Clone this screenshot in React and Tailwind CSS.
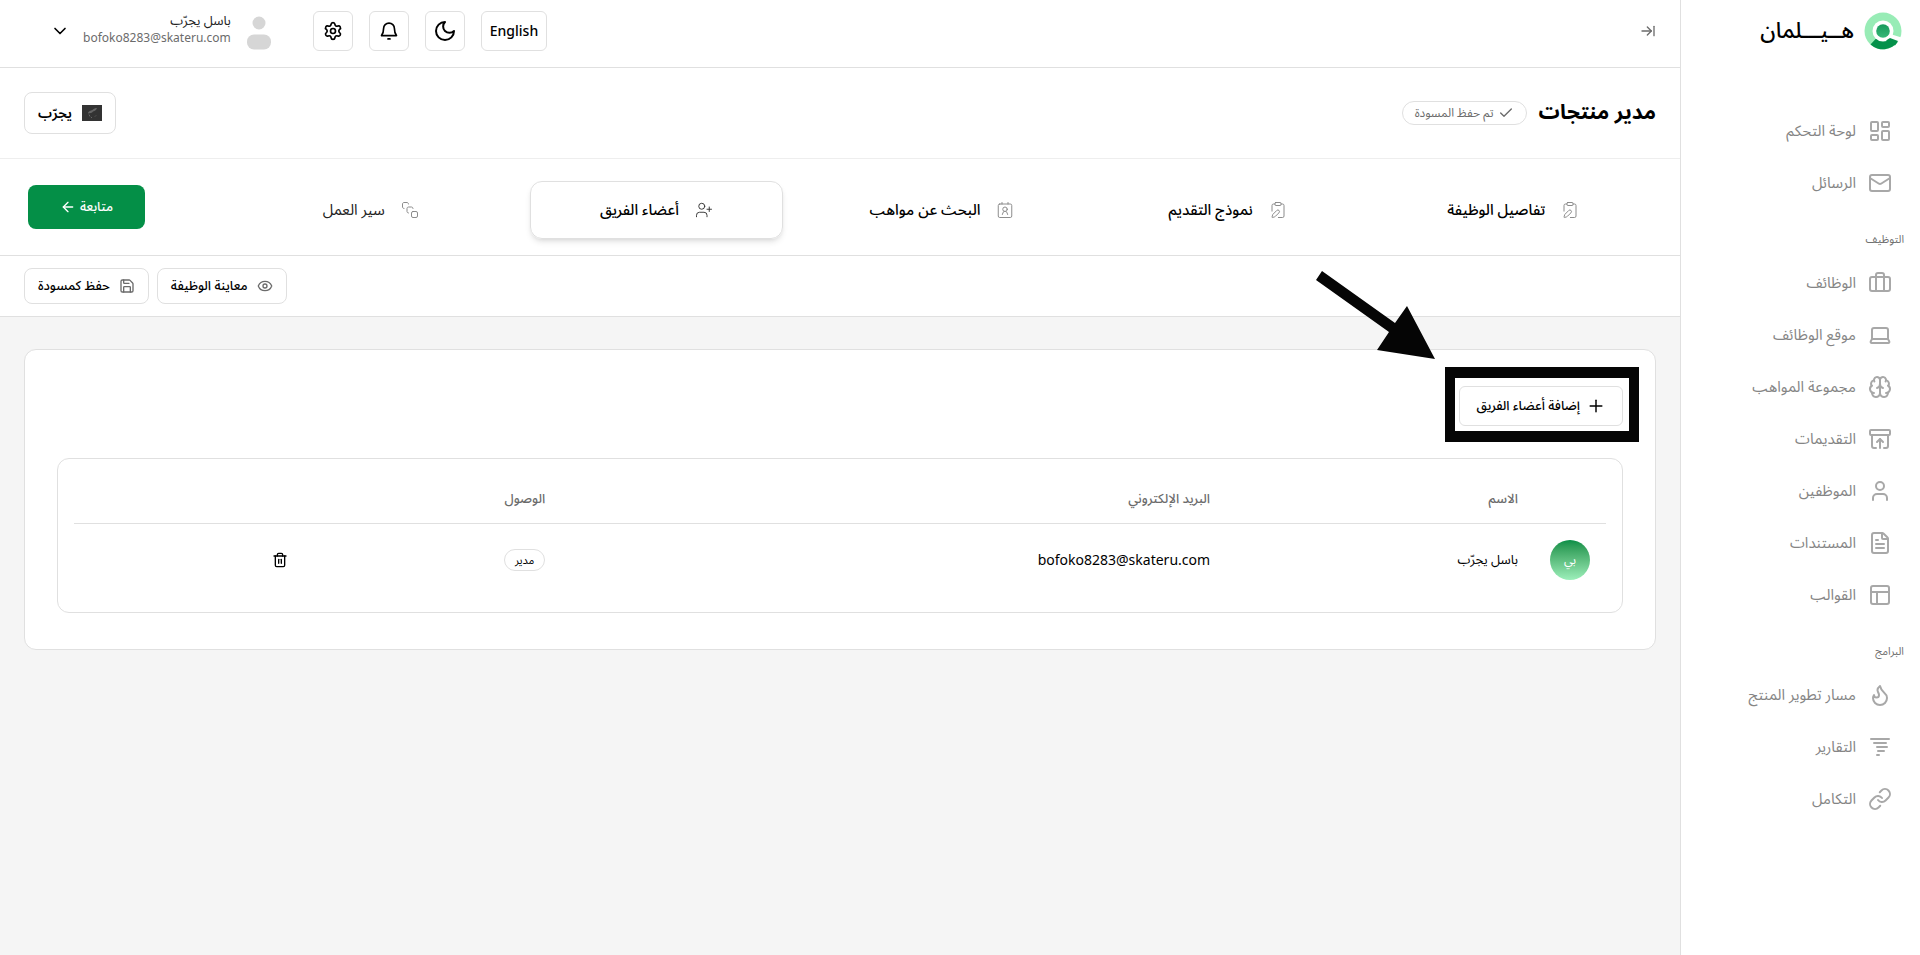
import React, { useState } from 'react';
import {
    LayoutDashboard,
    Mail,
    Briefcase,
    Laptop,
    Brain,
    ArchiveRestore,
    User,
    FileText,
    PanelsTopLeft,
    Flame,
    Tornado,
    Link,
    ArrowRightToLine,
    ArrowLeft,
    ChevronDown,
    Settings,
    Check,
    ClipboardPen,
    UserPlus,
    SquareStack,
    Eye,
    Save,
    Plus,
    Trash2,
} from 'lucide-react';

const mainLinks = [
    { label: 'لوحة التحكم', icon: LayoutDashboard },
    { label: 'الرسائل', icon: Mail },
];

const hiringLinks = [
    { label: 'الوظائف', icon: Briefcase },
    { label: 'موقع الوظائف', icon: Laptop },
    { label: 'مجموعة المواهب', icon: Brain },
    { label: 'التقديمات', icon: ArchiveRestore },
    { label: 'الموظفين', icon: User },
    { label: 'المستندات', icon: FileText },
    { label: 'القوالب', icon: PanelsTopLeft },
];

const programLinks = [
    { label: 'مسار تطوير المنتج', icon: Flame },
    { label: 'التقارير', icon: Tornado },
    { label: 'التكامل', icon: Link },
];

const members = [
    { id: 1, initials: 'بي', name: 'باسل يجرّب', email: 'bofoko8283@skateru.com', access: 'مدير' },
];

const TalentIcon = ({ className }) => (
    <svg viewBox="0 0 24 24" fill="none" stroke="currentColor" strokeWidth="1.25" strokeLinecap="round" strokeLinejoin="round" className={className}>
        <rect x="3" y="4" width="18" height="18" rx="2" />
        <path d="M8 2v2M16 2v2" />
        <circle cx="12" cy="11" r="3" />
        <path d="M8.5 18l1-3 1.5-1M15.5 18l-1-3-1.5-1" />
    </svg>
);

const MoonIcon = () => (
    <svg viewBox="0 0 24 24" fill="none" stroke="currentColor" strokeWidth="2" strokeLinecap="round" strokeLinejoin="round" className="size-6">
        <path d="M12 3a6 6 0 0 0 9 9 9 9 0 1 1-9-9Z" />
    </svg>
);

const BellIcon = () => (
    <svg viewBox="0 0 24 24" fill="none" stroke="currentColor" strokeWidth="2" strokeLinecap="round" strokeLinejoin="round" className="size-5">
        <path d="M12 2.500A6.500 6.500 0 0 0 5.500 9c0 4-.5 6-2.500 8.500h18c-2-2.500-2.500-4.500-2.500-8.500A6.500 6.500 0 0 0 12 2.500Z" />
        <path d="M10.800 21.500h2.400" />
    </svg>
);

const steps = [
    { id: 'details', label: 'تفاصيل الوظيفة', icon: ClipboardPen },
    { id: 'form', label: 'نموذج التقديم', icon: ClipboardPen },
    { id: 'talent', label: 'البحث عن مواهب', icon: TalentIcon },
    { id: 'team', label: 'أعضاء الفريق', icon: UserPlus },
    { id: 'workflow', label: 'سير العمل', icon: SquareStack },
];

const Logo = () => (
    <a href="#" className="flex items-center gap-[10px] pr-[18px] pt-3 text-black">
        <svg viewBox="0 0 38 38" className="size-[38px]">
            <defs>
                <linearGradient id="logoDot" x1="0" y1="0" x2="0" y2="1">
                    <stop offset="0" stopColor="#17995a" />
                    <stop offset="1" stopColor="#36b878" />
                </linearGradient>
            </defs>
            <circle cx="19" cy="19" r="18.5" fill="#98ecb6" />
            <path d="M34 29.5A18.5 18.5 0 0 1 6.5 32.5L19 19L27 26Z" fill="#04914a" />
            <circle cx="19" cy="19" r="10.5" fill="#fff" />
            <path d="M26 22l11.5 3.500-3.500 4.500-9-3z" fill="#fff" />
            <path d="M26 26l8 3-3 4.500-9-5z" fill="#04914a" />
            <circle cx="19" cy="19" r="6.800" fill="url(#logoDot)" />
        </svg>
        <span className="pb-1 text-[22px] font-medium leading-8">هــيـــلمان</span>
    </a>
);

const NavGroup = ({ title, links }) => (
    <div>
        {title && <h2 className="h-12 pr-4 pt-[18px] text-[11px] leading-6 text-[#707070]">{title}</h2>}
        <ul>
            {links.map(({ label, icon: Icon }) => (
                <li key={label}>
                    <a href="#" className="flex h-[52px] items-center gap-3 pr-7 text-[15px] text-[#858585]">
                        <Icon className="size-6 text-[#a8a8a8]" strokeWidth={2} />
                        <span className="pb-[2px]">{label}</span>
                    </a>
                </li>
            ))}
        </ul>
    </div>
);

const Header = () => (
    <header className="flex h-[68px] items-start justify-between border-b border-[#e0e0e0] pl-[50px] pr-6 pt-[11px]">
        <button type="button" aria-label="طي القائمة" className="flex h-10 items-center text-[#6b6b6b]">
            <ArrowRightToLine className="size-4" />
        </button>
        <div className="flex items-center gap-4">
            <button type="button" className="h-10 rounded-md border border-[#e0e0e0] px-2 text-sm font-medium">English</button>
            <button type="button" aria-label="الوضع الليلي" className="flex size-10 items-center justify-center rounded-md border border-[#e0e0e0]">
                <MoonIcon />
            </button>
            <button type="button" aria-label="الإشعارات" className="flex size-10 items-center justify-center rounded-md border border-[#e0e0e0]">
                <BellIcon />
            </button>
            <button type="button" aria-label="الإعدادات" className="flex size-10 items-center justify-center rounded-md border border-[#e0e0e0]">
                <Settings className="size-5" />
            </button>
            <button type="button" className="flex h-10 items-center pr-[26px]">
                <svg viewBox="0 0 24 34" className="mt-1 h-[34px] w-6" fill="#d6d6d6">
                    <circle cx="12" cy="7" r="6.500" />
                    <rect x="0" y="18.500" width="24" height="15" rx="7" />
                </svg>
                <span className="mr-4 pb-[6px] text-right">
                    <span className="block text-[13px] leading-5 text-[#222]">باسل يجرّب</span>
                    <span dir="ltr" className="block text-xs leading-4 text-[#6b6b6b]">bofoko8283@skateru.com</span>
                </span>
                <ChevronDown className="mr-[13px] size-5" />
            </button>
        </div>
    </header>
);

const TitleBar = () => (
    <div className="flex h-[91px] items-center justify-between border-b border-[#eee] px-6">
        <div className="flex items-center gap-3">
            <h1 className="pb-[2px] text-[21px] font-bold">مدير منتجات</h1>
            <span className="flex h-6 items-center gap-1 rounded-full border border-[#e0e0e0] px-3 text-xs text-[#6b6b6b]">
                <Check className="size-4" />
                تم حفظ المسودة
            </span>
        </div>
        <button type="button" className="flex h-[42px] items-center gap-[10px] rounded-lg border border-[#e0e0e0] px-[13px] text-sm font-semibold">
            <svg viewBox="0 0 20 16" className="h-4 w-5">
                <rect width="20" height="16" fill="#333" />
                <path d="M15 3c-3 0-4 2-6 2.500-2 .5-3 1.500-3 3 2-.5 4-.5 5-2 2-.5 3.500-1.500 4-3.500Z" fill="#666" />
                <path d="M7 9.500l1 2M9 12.500h1M13 11.500l1-1" fill="none" stroke="#666" strokeWidth="1" />
            </svg>
            يجرّب
        </button>
    </div>
);

const Steps = () => {
    const [active, setActive] = useState('team');

    return (
        <div className="flex items-start justify-between border-b border-[#e0e0e0] pb-4 pl-7 pr-10 pt-[22px]">
            <nav className="grid flex-1 grid-cols-5 gap-8">
                {steps.map(({ id, label, icon: Icon }) => (
                    <button
                        key={id}
                        type="button"
                        onClick={() => setActive(id)}
                        className={`flex h-[58px] items-center justify-center gap-4 rounded-xl border text-[15px] ${
                            active === id ? 'border-[#e0e0e0] shadow-md' : 'border-transparent'
                        } ${id === 'workflow' ? 'text-[#222]' : 'font-medium text-black'}`}
                    >
                        <Icon className={active === id ? 'size-[18px] text-[#333]' : 'size-[18px] text-[#858585]'} strokeWidth={1.25} />
                        <span className="pb-[2px]">{label}</span>
                    </button>
                ))}
            </nav>
            <button type="button" className="mr-[99px] mt-1 flex h-11 w-[117px] items-center justify-center gap-1 rounded-lg bg-[#048f47] text-[13px] font-medium text-white">
                متابعة
                <ArrowLeft className="size-4" />
            </button>
        </div>
    );
};

const Toolbar = () => (
    <div className="flex justify-end gap-2 border-b border-[#e0e0e0] px-6 py-3">
        <button type="button" className="flex h-9 items-center gap-[9px] rounded-lg border border-[#e0e0e0] px-[13px] text-[13px] font-medium">
            <Eye className="size-4 text-[#6b6b6b]" />
            معاينة الوظيفة
        </button>
        <button type="button" className="flex h-9 items-center gap-[9px] rounded-lg border border-[#e0e0e0] px-[13px] text-[13px] font-medium">
            <Save className="size-4 text-[#6b6b6b]" />
            حفظ كمسودة
        </button>
    </div>
);

const TeamTable = () => (
    <div className="mt-8 rounded-xl border border-[#e0e0e0] px-4 pb-4 pt-4">
        <table className="w-full table-fixed text-right text-[13px]">
            <colgroup>
                <col className="w-[72px]" />
                <col className="w-[20.1%]" />
                <col className="w-[43.4%]" />
                <col className="w-[16.8%]" />
                <col />
            </colgroup>
            <thead>
                <tr className="h-12 border-b border-[#e0e0e0] text-[#6b6b6b]">
                    <th className="px-4"></th>
                    <th className="px-4 font-medium">الاسم</th>
                    <th className="px-4 font-medium">البريد الإلكتروني</th>
                    <th className="px-4 font-medium">الوصول</th>
                    <th className="px-4"></th>
                </tr>
            </thead>
            <tbody>
                {members.map((member) => (
                    <tr key={member.id} className="h-[73px]">
                        <td className="px-4">
                            <span className="flex size-10 items-center justify-center rounded-full bg-linear-to-b from-[#048f47] to-[#9cefba] text-xs text-white">
                                {member.initials}
                            </span>
                        </td>
                        <td className="px-4">{member.name}</td>
                        <td className="px-4 text-sm">{member.email}</td>
                        <td className="px-4">
                            <span className="inline-flex h-[22px] items-center rounded-full border border-[#e0e0e0] px-[10px] text-[11px]">{member.access}</span>
                        </td>
                        <td className="px-4">
                            <button type="button" aria-label="حذف" className="flex items-center">
                                <Trash2 className="size-4" />
                            </button>
                        </td>
                    </tr>
                ))}
            </tbody>
        </table>
    </div>
);

const App = () => {
    return (
        <div dir="rtl" className="flex min-h-screen bg-white font-['Noto_Sans','Noto_Sans_Arabic','DejaVu_Sans',sans-serif] text-black">
            <aside className="w-60 shrink-0 border-l border-[#e0e0e0]">
                <Logo />
                <nav className="mt-[55px]">
                    <NavGroup links={mainLinks} />
                    <NavGroup title="التوظيف" links={hiringLinks} />
                    <NavGroup title="البرامج" links={programLinks} />
                </nav>
            </aside>

            <div className="flex min-w-0 flex-1 flex-col">
                <Header />
                <TitleBar />
                <Steps />
                <Toolbar />
                <main className="flex-1 bg-[#f5f5f5] px-6 py-8">
                    <section className="rounded-xl border border-[#e0e0e0] bg-white px-8 pb-9 pt-9">
                        <div className="relative w-fit">
                            <button type="button" className="flex h-10 items-center gap-[6px] rounded-md border border-[#e0e0e0] px-4 text-[13px] font-medium">
                                <Plus className="size-5" strokeWidth={1.75} />
                                إضافة أعضاء الفريق
                            </button>
                            <div className="pointer-events-none absolute -bottom-4 -left-[14px] -right-4 -top-[19px] border-x-10 border-y-11 border-[#050505]" />
                            <svg viewBox="0 0 120 88" className="pointer-events-none absolute -top-[115px] right-[187px] h-[88px] w-[120px]" fill="#050505">
                                <path d="M6 0L79 52L91 35L119 88L61 79L73 61L0 9Z" />
                            </svg>
                        </div>
                        <TeamTable />
                    </section>
                </main>
            </div>
        </div>
    );
};

export default App;
